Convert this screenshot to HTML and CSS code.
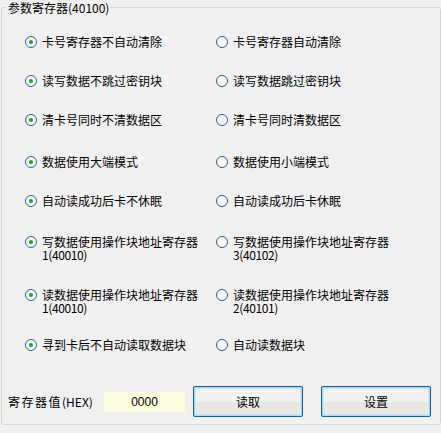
FILE: index.html
```html
<!DOCTYPE html>
<html lang="zh-CN">
<head>
    <meta charset="UTF-8">
    <title>参数寄存器</title>
    <link rel="stylesheet" href="styles.css">
</head>
<body>

<fieldset class="group">
    <legend>参数寄存器(40100)</legend>

    <div class="options">
        <label class="opt r1"><span class="radio on"></span><span class="txt">卡号寄存器不自动清除</span></label>
        <label class="opt r1"><span class="radio"></span><span class="txt">卡号寄存器自动清除</span></label>

        <label class="opt r1"><span class="radio on"></span><span class="txt">读写数据不跳过密钥块</span></label>
        <label class="opt r1"><span class="radio"></span><span class="txt">读写数据跳过密钥块</span></label>

        <label class="opt r3"><span class="radio on"></span><span class="txt">清卡号同时不清数据区</span></label>
        <label class="opt r3"><span class="radio"></span><span class="txt">清卡号同时清数据区</span></label>

        <label class="opt r1"><span class="radio on"></span><span class="txt">数据使用大端模式</span></label>
        <label class="opt r1"><span class="radio"></span><span class="txt">数据使用小端模式</span></label>

        <label class="opt r5"><span class="radio on"></span><span class="txt">自动读成功后卡不休眠</span></label>
        <label class="opt r5"><span class="radio"></span><span class="txt">自动读成功后卡休眠</span></label>

        <label class="opt r6"><span class="radio on"></span><span class="txt">写数据使用操作块地址寄存器<br><span class="num">1(40010)</span></span></label>
        <label class="opt r6"><span class="radio"></span><span class="txt">写数据使用操作块地址寄存器<br><span class="num">3(40102)</span></span></label>

        <label class="opt r7"><span class="radio on"></span><span class="txt">读数据使用操作块地址寄存器<br><span class="num">1(40010)</span></span></label>
        <label class="opt r7"><span class="radio"></span><span class="txt">读数据使用操作块地址寄存器<br><span class="num">2(40101)</span></span></label>

        <label class="opt r8"><span class="radio on"></span><span class="txt">寻到卡后不自动读取数据块</span></label>
        <label class="opt r8"><span class="radio"></span><span class="txt">自动读数据块</span></label>
    </div>

    <div class="bottom">
        <span class="reg-label"><span class="cjk">寄存器值</span>(HEX)</span>
        <input class="hex" type="text" value="0000">
        <button class="btn">读取</button>
        <button class="btn">设置</button>
    </div>
</fieldset>

</body>
</html>
```

FILE: styles.css
```css
body {
    font-family: "Noto Sans CJK SC", "Liberation Sans", sans-serif;
    font-size: 12px;
    color: #000;
    background: #f0f0f0;
    margin: 0;
    padding: 0;
}

.group {
    box-sizing: border-box;
    width: 440px;
    height: 425px;
    margin: 0 0 0 1px;
    padding: 20px 0 0 0;
    border: 1px solid #d5d5d5;
    border-radius: 3px;
}

.group legend {
    margin-left: 4px;
    padding: 0 2px;
    line-height: 15px;
    font-size: 12px;
}

.options {
    display: grid;
    grid-template-columns: 191px 191px;
    margin-left: 23px;
}

.opt {
    display: flex;
    align-items: flex-start;
    gap: 5px;
    line-height: 13px;
    height: 39px;
}

.opt.r3 { height: 42px; }
.opt.r5 { height: 41px; }
.opt.r6 { height: 53px; }
.opt.r7 { height: 50px; }
.opt.r8 { height: 48px; }

.radio {
    flex: none;
    box-sizing: border-box;
    width: 12px;
    height: 12px;
    margin-top: 0.5px;
    border: 1px solid #2f5f91;
    border-radius: 50%;
    background: radial-gradient(circle, #ffffff 55%, #e6eef5 100%);
    display: flex;
    align-items: center;
    justify-content: center;
}

.radio.on::after {
    content: "";
    width: 4px;
    height: 4px;
    border-radius: 50%;
    background: #1aa51a;
}

.txt {
    white-space: nowrap;
}

.num {
    letter-spacing: -0.4px;
}

.bottom {
    display: flex;
    align-items: center;
    height: 31px;
    padding-left: 6px;
}

.reg-label {
    width: 96px;
}

.reg-label .cjk {
    letter-spacing: 1.5px;
}

.hex {
    box-sizing: border-box;
    width: 81px;
    height: 20px;
    border: none;
    background: #fdfde2;
    font-family: "Liberation Sans", sans-serif;
    font-size: 12px;
    text-align: center;
    padding: 0;
    margin-right: 8px;
}

.btn {
    box-sizing: border-box;
    width: 110px;
    height: 31px;
    border: 1px solid #1d5aa0;
    border-radius: 2px;
    box-shadow: inset 0 0 0 1px #a9d8f5, inset 0 0 0 2px #c8e6f8;
    background: linear-gradient(#f4f4f4 0%, #f0f0f0 50%, #e6e6e3 51%, #e9e9e6 100%);
    font-family: "Noto Sans CJK SC", sans-serif;
    font-size: 12px;
    color: #000;
    padding: 0;
}

.btn + .btn {
    margin-left: 18px;
}
```
